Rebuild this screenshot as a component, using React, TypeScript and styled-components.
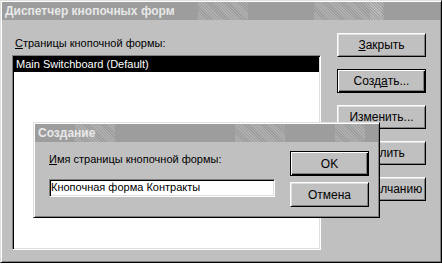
import React from 'react';
import styled, { createGlobalStyle, css } from 'styled-components';

const GlobalStyle = createGlobalStyle`
  html, body {
    margin: 0;
    padding: 0;
    background: #ffffff;
  }
  body {
    font-family: "Liberation Sans", Arial, sans-serif;
    font-size: 11px;
    color: #000;
  }
`;

const raised = css`
  border: 1px solid;
  border-color: #dfdfdf #000 #000 #dfdfdf;
  box-shadow: inset 1px 1px #fff, inset -1px -1px #808080;
`;

const sunken = css`
  border: 1px solid;
  border-color: #808080 #fff #fff #808080;
  box-shadow: inset 1px 1px #000, inset -1px -1px #dfdfdf;
`;

// light dither patches on the gray title bar
const dither = 'repeating-linear-gradient(45deg, rgba(255,255,255,0.2) 0 1px, transparent 1px 2px)';

const Window = styled.div`
    position: relative;
    width: 442px;
    height: 263px;
    box-sizing: border-box;
    padding: 1px;
    background: #c0c0c0;
    ${raised}
  `,
  TitleBar = styled.div`
    height: 18px;
    display: flex;
    align-items: center;
    padding-left: 3px;
    font-weight: 700;
    font-size: 12px;
    color: #e8e8e8;
    background-color: #9d9d9d;
    background-image: ${(p) => p.$patches.map(() => dither).join(', ')};
    background-repeat: no-repeat;
    background-size: ${(p) => p.$patches.map((x) => `${x[1]}px 18px`).join(', ')};
    background-position: ${(p) => p.$patches.map((x) => `${x[0]}px 0`).join(', ')};
  `,
  Body = styled.div`
    display: flex;
    padding: 13px 13px 0 10px;
  `,
  LeftCol = styled.div`
    width: 309px;
    display: flex;
    flex-direction: column;
  `,
  Label = styled.div`
    height: 13px;
    line-height: 13px;
    margin: 4px 0 5px 3px;
    white-space: nowrap;
  `,
  ListBox = styled.div`
    height: 195px;
    box-sizing: border-box;
    padding: 1px;
    background: #fff;
    ${sunken}
  `,
  ListRow = styled.div`
    height: 15px;
    line-height: 15px;
    padding-left: 2px;
    background: ${(p) => (p.$selected ? '#000' : 'transparent')};
    color: ${(p) => (p.$selected ? '#fff' : '#000')};
  `,
  ButtonCol = styled.div`
    margin-left: ${(p) => p.$offset}px;
    display: flex;
    flex-direction: column;
    gap: ${(p) => p.$gap}px;
  `,
  Button = styled.div`
    width: ${(p) => p.$w}px;
    height: ${(p) => p.$h}px;
    box-sizing: border-box;
    display: flex;
    align-items: center;
    justify-content: center;
    background: #c0c0c0;
    white-space: nowrap;
    font-size: 12px;
    ${(p) =>
      p.$default
        ? css`
            border: 1px solid #000;
            box-shadow: inset 1px 1px #fff, inset -1px -1px #000,
              inset -2px -2px #808080;
          `
        : css`
            border: 1px solid;
            border-color: #fff #000 #000 #fff;
            box-shadow: inset 1px 1px #dfdfdf, inset -1px -1px #808080;
          `}
  `,
  Dialog = styled.div`
    position: absolute;
    left: 32px;
    top: 121px;
    width: 347px;
    height: 96px;
    box-sizing: border-box;
    padding: 1px;
    background: #c0c0c0;
    ${raised}
  `,
  DialogBody = styled.div`
    display: flex;
    padding: 9px 9px 0 14px;
  `,
  DialogLeft = styled.div`
    width: 226px;
    margin-top: 2px;
    display: flex;
    flex-direction: column;
  `,
  DialogLabel = styled.div`
    height: 13px;
    line-height: 13px;
    margin-bottom: 13px;
    white-space: nowrap;
  `,
  TextInput = styled.div`
    height: 18px;
    box-sizing: border-box;
    padding: 0 1px;
    line-height: 15px;
    background: #fff;
    white-space: nowrap;
    ${sunken}
  `;

export default function App(): JSX.Element {
  return (
    <>
      <GlobalStyle />
      <Window>
        <TitleBar $patches={[[196, 50], [312, 70], [368, 12]]}>Диспетчер кнопочных форм</TitleBar>
        <Body>
          <LeftCol>
            <Label>
              <u>С</u>траницы кнопочной формы:
            </Label>
            <ListBox>
              <ListRow $selected>Main Switchboard (Default)</ListRow>
            </ListBox>
          </LeftCol>
          <ButtonCol $gap={12} $offset={16}>
            <Button $w={89} $h={24}>
              <u>З</u>акрыть
            </Button>
            <Button $w={89} $h={24} $default>
              Созд<u>а</u>ть...
            </Button>
            <Button $w={89} $h={24}>
              <u>И</u>зменить...
            </Button>
            <Button $w={89} $h={24}>
              <u>У</u>далить
            </Button>
            <Button $w={89} $h={24}>
              По у<u>м</u>олчанию
            </Button>
          </ButtonCol>
        </Body>
        <Dialog>
          <TitleBar $patches={[[40, 40], [200, 50], [300, 30]]}>Создание</TitleBar>
          <DialogBody>
            <DialogLeft>
              <DialogLabel>
                <u>И</u>мя страницы кнопочной формы:
              </DialogLabel>
              <TextInput>Кнопочная форма Контракты</TextInput>
            </DialogLeft>
            <ButtonCol $gap={6} $offset={15}>
              <Button $w={79} $h={25} $default>
                OK
              </Button>
              <Button $w={79} $h={25}>
                Отмена
              </Button>
            </ButtonCol>
          </DialogBody>
        </Dialog>
      </Window>
    </>
  );
}
